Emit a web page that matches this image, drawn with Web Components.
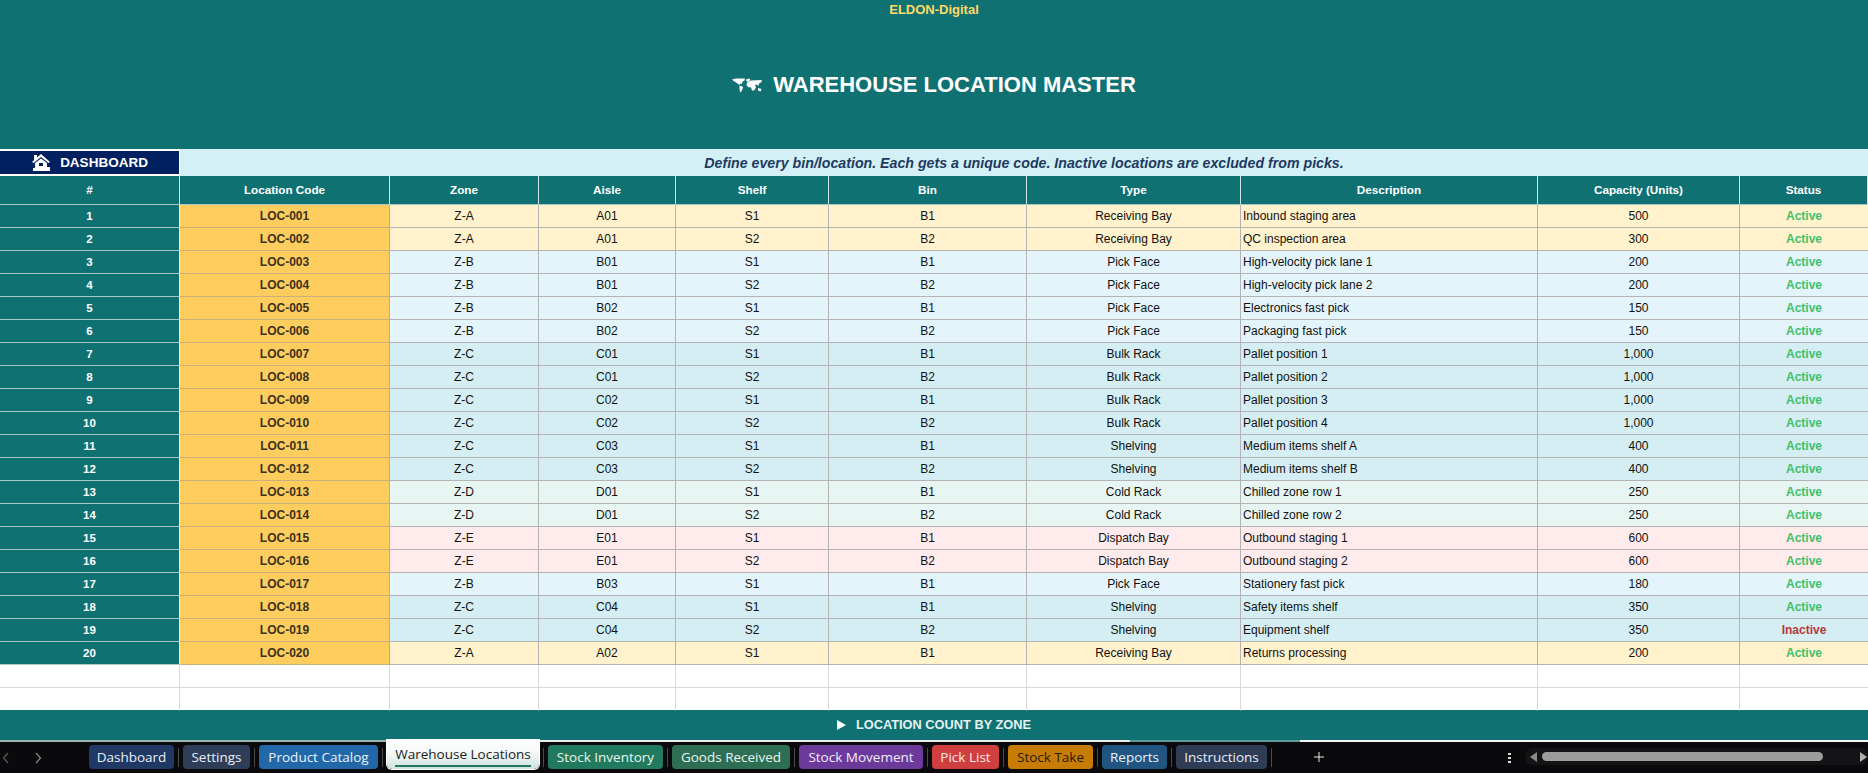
<!DOCTYPE html>
<html>
<head>
<meta charset="utf-8">
<title>Warehouse Location Master</title>
<style>
  html, body { margin: 0; padding: 0; height: 100%; overflow: hidden; background: #fff; }
  body { font-family: "Liberation Sans", Arial, sans-serif; display: flex; flex-direction: column; height: 773px; }
</style>
</head>
<body>
<sheet-banner brand="ELDON-Digital" heading="WAREHOUSE LOCATION MASTER"></sheet-banner>
<sheet-note label="DASHBOARD">Define every bin/location. Each gets a unique code. Inactive locations are excluded from picks.</sheet-note>
<sheet-grid></sheet-grid>
<sheet-section>LOCATION COUNT BY ZONE</sheet-section>
<sheet-tabs>
  <sheet-tab w="85" bg="#1f3864" fg="#e8eef8">Dashboard</sheet-tab>
  <sheet-tab w="67" bg="#2f3e58" fg="#e8eef8">Settings</sheet-tab>
  <sheet-tab w="119" bg="#2268a8" fg="#e8f2fb">Product Catalog</sheet-tab>
  <sheet-tab w="152" active>Warehouse Locations</sheet-tab>
  <sheet-tab w="115" bg="#217a5e" fg="#e8f6f0">Stock Inventory</sheet-tab>
  <sheet-tab w="118" bg="#2e6e55" fg="#e8f6f0">Goods Received</sheet-tab>
  <sheet-tab w="124" bg="#6b3a9b" fg="#f3eafb">Stock Movement</sheet-tab>
  <sheet-tab w="67" bg="#d03f3f" fg="#fdeaea">Pick List</sheet-tab>
  <sheet-tab w="85" bg="#c77c08" fg="#2a1a00">Stock Take</sheet-tab>
  <sheet-tab w="65" bg="#1f5580" fg="#e8f2fb">Reports</sheet-tab>
  <sheet-tab w="91" bg="#2e3d55" fg="#e8eef8">Instructions</sheet-tab>
</sheet-tabs>

<script>
const TEAL = '#107173';

class SheetBanner extends HTMLElement {
  constructor() {
    super();
    this.attachShadow({ mode: 'open' });
    this.shadowRoot.innerHTML = `
      <style>
        :host { display: flex; flex-direction: column; align-items: center; height: 149px; background: ${TEAL}; flex: none; }
        .brand { color: #ffd966; font-weight: 700; font-size: 13px; line-height: 19px; }
        .title { display: flex; align-items: center; gap: 11px; margin-top: 53px; color: #fff; font-weight: 700; font-size: 22px; line-height: 26px; }
        svg { width: 30px; height: 14px; display: block; }
      </style>
      <div class="brand">${this.getAttribute('brand')}</div>
      <div class="title">
        <svg viewBox="0 0 30 14" fill="#fff">
          <path d="M0 1.500 L4 .5 L13 .5 L12.500 2.500 L10.500 3.500 L10 6 L8 5.500 L7.500 7 L5.500 5.500 L3.500 4 L1.500 3 Z"/>
          <path d="M7.500 7.500 L10.500 8.500 L11 10 L9 14 L8 14 L7.500 10.500 Z"/>
          <path d="M14 1.500 L17 .5 L18.500 1.500 L17 3.500 L14.500 3.500 Z"/>
          <path d="M15 4.500 L19 2.500 L30 2 L29 4.500 L27 5.500 L26.500 8 L24.500 6.500 L23 7 L24 9.500 L22 12.500 L20 12.500 L19 9.500 L16 9 L14.500 7 Z"/>
          <path d="M26 10 L29.500 11 L28.500 13.500 L26 12.500 Z"/>
        </svg>
        <span>${this.getAttribute('heading')}</span>
      </div>`;
  }
}
customElements.define('sheet-banner', SheetBanner);

class SheetNote extends HTMLElement {
  constructor() {
    super();
    this.attachShadow({ mode: 'open' });
    this.shadowRoot.innerHTML = `
      <style>
        :host { display: flex; height: 27px; flex: none; background: #d2f0f5; }
        .btn { width: 180px; box-sizing: border-box; display: flex; align-items: center; justify-content: center; gap: 10px; padding-left: 1px;
               background: #002060; color: #fff; font-weight: 700; font-size: 13.500px; border: solid #fff; border-width: 2px 1px 2px 0; }
        svg { width: 18px; height: 17px; display: block; }
        .text { flex: 1; text-align: center; align-self: center; font-style: italic; font-weight: 700; font-size: 14.200px; color: #1f3a5f; }
      </style>
      <div class="btn">
        <svg viewBox="0 0 18 17" fill="#fff">
          <path d="M9 0 L18 8 L16.500 9 L9 3 L1.500 9 L0 8 L2 6.200 L2 1 L5 1 L5 3.500 Z"/>
          <path fill-rule="evenodd" d="M3 9 L9 4.500 L15 9 L15 13 L18 13 L18 17 L1 17 L1 14 L3 14 Z M7 9 L7 12 L11 12 L11 9 Z"/>
        </svg>
        <span>${this.getAttribute('label')}</span>
      </div>
      <div class="text"><slot></slot></div>`;
  }
}
customElements.define('sheet-note', SheetNote);

const COLS = '180px 210px 149px 137px 153px 198px 214px 297px 202px 1fr';

class SheetRow extends HTMLElement {
  set cells(values) {
    const kind = this.getAttribute('kind');
    const bg = this.getAttribute('bg') || '#fff';
    const root = this.attachShadow({ mode: 'open' });
    root.innerHTML = `
      <style>
        :host { display: grid; grid-template-columns: ${COLS}; height: 23px; font-size: 12px; color: #111; }
        .c { box-sizing: border-box; display: flex; align-items: center; justify-content: center;
             background: ${bg}; border-right: 1px solid #b4b4b4; border-bottom: 1px solid #b4b4b4; white-space: nowrap; overflow: hidden; }
        .idx { background: ${TEAL}; color: #fff; font-weight: 700; font-size: 11.500px; border-right: 1px solid #e4eeee; border-bottom: 1px solid #a8c8c8; }
        .code { background: #ffcd5e; font-weight: 700; color: #3a3220; border-right-color: #bfae80; border-bottom-color: #c8b080; }
        .left { justify-content: flex-start; padding-left: 2px; }
        .on { color: #3fc06c; font-weight: 700; }
        .off { color: #b8383c; font-weight: 700; }
        :host([kind=head]) .c { background: ${TEAL}; color: #fff; font-weight: 700; font-size: 11.700px; border-right: 1px solid #d0e4e4; border-bottom: 1px solid #a8c8c8; height: 29px; padding-bottom: 2px; }
        :host([kind=head]) { height: 29px; }
        :host([kind=empty]) .c { background: #fff; border-color: #d9d9d9; }
        :host([kind=empty]:last-child) .c { border-bottom-color: ${TEAL}; }
        .c:last-child { border-right: 0; }
      </style>`;
    values.forEach((v, i) => {
      const d = document.createElement('div');
      d.className = 'c';
      if (i === 0 && kind !== 'empty') d.classList.add('idx');
      if (i === 1 && !kind) d.classList.add('code');
      if (i === 7 && !kind) d.classList.add('left');
      if (i === 9 && !kind) d.classList.add(v === 'Inactive' ? 'off' : 'on');
      d.textContent = v;
      root.appendChild(d);
    });
  }
}
customElements.define('sheet-row', SheetRow);

const ZONE_BG = { 'Z-A': '#fff2cc', 'Z-B': '#e3f4fb', 'Z-C': '#d4eef3', 'Z-D': '#e8f6f3', 'Z-E': '#ffebeb' };
const LOCATIONS = [
  ['Z-A','A01','S1','B1','Receiving Bay','Inbound staging area','500','Active'],
  ['Z-A','A01','S2','B2','Receiving Bay','QC inspection area','300','Active'],
  ['Z-B','B01','S1','B1','Pick Face','High-velocity pick lane 1','200','Active'],
  ['Z-B','B01','S2','B2','Pick Face','High-velocity pick lane 2','200','Active'],
  ['Z-B','B02','S1','B1','Pick Face','Electronics fast pick','150','Active'],
  ['Z-B','B02','S2','B2','Pick Face','Packaging fast pick','150','Active'],
  ['Z-C','C01','S1','B1','Bulk Rack','Pallet position 1','1,000','Active'],
  ['Z-C','C01','S2','B2','Bulk Rack','Pallet position 2','1,000','Active'],
  ['Z-C','C02','S1','B1','Bulk Rack','Pallet position 3','1,000','Active'],
  ['Z-C','C02','S2','B2','Bulk Rack','Pallet position 4','1,000','Active'],
  ['Z-C','C03','S1','B1','Shelving','Medium items shelf A','400','Active'],
  ['Z-C','C03','S2','B2','Shelving','Medium items shelf B','400','Active'],
  ['Z-D','D01','S1','B1','Cold Rack','Chilled zone row 1','250','Active'],
  ['Z-D','D01','S2','B2','Cold Rack','Chilled zone row 2','250','Active'],
  ['Z-E','E01','S1','B1','Dispatch Bay','Outbound staging 1','600','Active'],
  ['Z-E','E01','S2','B2','Dispatch Bay','Outbound staging 2','600','Active'],
  ['Z-B','B03','S1','B1','Pick Face','Stationery fast pick','180','Active'],
  ['Z-C','C04','S1','B1','Shelving','Safety items shelf','350','Active'],
  ['Z-C','C04','S2','B2','Shelving','Equipment shelf','350','Inactive'],
  ['Z-A','A02','S1','B1','Receiving Bay','Returns processing','200','Active']
];

class SheetGrid extends HTMLElement {
  constructor() {
    super();
    const root = this.attachShadow({ mode: 'open' });
    root.innerHTML = `<style>:host { display: block; flex: none; }</style>`;
    const add = (kind, bg, values) => {
      const row = document.createElement('sheet-row');
      if (kind) row.setAttribute('kind', kind);
      if (bg) row.setAttribute('bg', bg);
      row.cells = values;
      root.appendChild(row);
    };
    add('head', '', ['#','Location Code','Zone','Aisle','Shelf','Bin','Type','Description','Capacity (Units)','Status']);
    LOCATIONS.forEach((l, i) => {
      add('', ZONE_BG[l[0]], [String(i + 1), 'LOC-' + String(i + 1).padStart(3, '0'), ...l]);
    });
    add('empty', '', Array(10).fill(''));
    add('empty', '', Array(10).fill(''));
  }
}
customElements.define('sheet-grid', SheetGrid);

class SheetSection extends HTMLElement {
  constructor() {
    super();
    this.attachShadow({ mode: 'open' });
    this.shadowRoot.innerHTML = `
      <style>
        :host { display: flex; flex: none; height: 31px; align-items: center; justify-content: center; gap: 10px; padding-bottom: 4px; box-sizing: border-box; position: relative;
                background: ${TEAL}; color: #e4f2f2; font-weight: 700; font-size: 12.800px; }
        :host::after { content: ""; position: absolute; left: 0; right: 0; bottom: 0; height: 2px;
                background: linear-gradient(90deg, #9fb5b5 0 387px, #e8eeee 387px 1130px, #5f9a9a 1130px 1300px, #f4f8f8 1300px); }
        i { width: 0; height: 0; border-left: 9px solid #fff; border-top: 5px solid transparent; border-bottom: 5px solid transparent; }
      </style>
      <i></i><span><slot></slot></span>`;
  }
}
customElements.define('sheet-section', SheetSection);

class SheetTab extends HTMLElement {
  constructor() {
    super();
    this.attachShadow({ mode: 'open' });
    const active = this.hasAttribute('active');
    this.shadowRoot.innerHTML = `
      <style>
        :host { display: flex; flex: none; position: relative; box-sizing: border-box; width: ${this.getAttribute('w')}px; }
        .t { flex: 1; display: flex; align-items: center; justify-content: center; height: 24px; margin-top: 3px; border-radius: 4px;
             background: ${this.getAttribute('bg')}; color: ${this.getAttribute('fg')}; font: 13.500px "Open Sans", sans-serif; white-space: nowrap; }
        :host([active]) .t { height: 29px; margin-top: -2px; background: linear-gradient(#fff, #f4f8f7 45%, #cfe3de); color: #222; border-radius: 0 0 5px 5px;
             box-shadow: 0 0 0 1px #fff; flex-direction: column; justify-content: flex-start; padding-top: 5px; box-sizing: border-box; }
        u { display: block; width: 136px; height: 2px; margin-top: 2px; background: #217a5e; }
        :host::after { content: ""; position: absolute; right: -5px; top: 6px; width: 1px; height: 19px; background: #4a4a4a; }
      </style>
      <div class="t"><span><slot></slot></span>${active ? '<u></u>' : ''}</div>`;
  }
}
customElements.define('sheet-tab', SheetTab);

class SheetTabs extends HTMLElement {
  constructor() {
    super();
    this.attachShadow({ mode: 'open' });
    this.shadowRoot.innerHTML = `
      <style>
        :host { display: flex; flex: 1; align-items: flex-start; background: #0a0a0c; padding-left: 2px; }
        .nav { display: flex; width: 87px; height: 31px; align-items: center; gap: 24px; }
        .nav svg { width: 8px; height: 12px; display: block; }
        .tabs { display: flex; gap: 9px; }
        .plus { margin-left: 47px; width: 10px; height: 10px; margin-top: 10px; flex: none; }
        .dots { margin-left: 184px; width: 4px; margin-top: 11px; flex: none; display: flex; flex-direction: column; gap: 2px; }
        .dots b { width: 3px; height: 2px; background: #ddd; }
        .bar { margin-left: 13px; flex: 1; height: 17px; margin-top: 6px; display: flex; align-items: center; background: #141416; border-radius: 8px; }
        .arrow { width: 0; height: 0; border-top: 5px solid transparent; border-bottom: 5px solid transparent; }
        .thumb { height: 9px; width: 281px; margin: 0 37px 0 5px; border-radius: 4.500px; background: #9c9c9c; }
      </style>
      <div class="nav">
        <svg viewBox="0 0 8 12" fill="none" stroke="#5c5c5c" stroke-width="1.200"><path d="M6 1 L1.500 6 L6 11"/></svg>
        <svg viewBox="0 0 8 12" fill="none" stroke="#8a8a8a" stroke-width="1.200"><path d="M2 1 L6.500 6 L2 11"/></svg>
      </div>
      <div class="tabs"><slot></slot></div>
      <svg class="plus" viewBox="0 0 10 10" stroke="#e8e8e8"><path d="M5 0 V10 M0 5 H10"/></svg>
      <div class="dots"><b></b><b></b><b></b></div>
      <div class="bar">
        <i class="arrow" style="border-right:7px solid #8a8a8a;margin-left:5px"></i>
        <div class="thumb"></div>
        <i class="arrow" style="border-left:7px solid #b0b0b0"></i>
      </div>`;
  }
}
customElements.define('sheet-tabs', SheetTabs);
</script>
</body>
</html>
